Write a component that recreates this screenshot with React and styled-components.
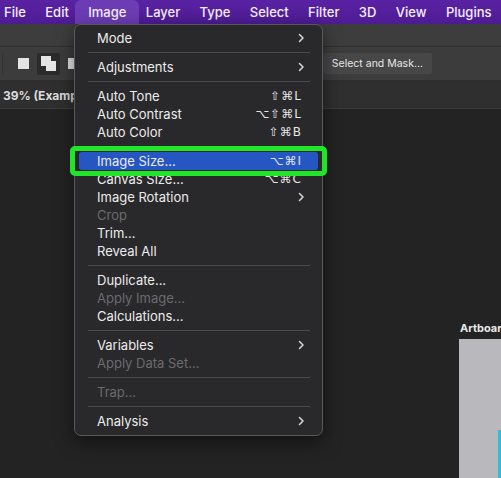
import React from 'react'
import styled, { createGlobalStyle } from 'styled-components'

const GlobalStyle = createGlobalStyle`
  html, body {
    margin: 0;
    padding: 0;
    background: #232323;
  }
  body {
    font-family: Inter, "Noto Sans", "DejaVu Sans", sans-serif;
    -webkit-font-smoothing: antialiased;
  }
`

const Screen = styled.div`
  position: relative;
  width: 501px;
  height: 478px;
  overflow: hidden;
  display: flex;
  flex-direction: column;
  background: #232323;
`

const MenuBar = styled.div`
  height: 24px;
  flex: 0 0 24px;
  display: flex;
  align-items: center;
  gap: 19.4px;
  padding-left: 4px;
  background: linear-gradient(#5a22a3, #4e1b94);
`

const MenuBarItem = styled.div`
  height: 24px;
  display: flex;
  align-items: center;
  padding: 0 ${({ active }) => (active ? 13 : 0)}px;
  margin: 0 ${({ active }) => (active ? -13 : 0)}px;
  font-size: 13px;
  font-weight: 500;
  color: #f4f0fa;
  border-radius: 6px 6px 0 0;
  background: ${({ active }) => (active ? '#6c3cb4' : 'transparent')};
`

const TopStrip = styled.div`
  height: 22px;
  flex: 0 0 22px;
  background: #3d3d3d;
  border-bottom: 1px solid #2f2f2f;
`

const OptionsBar = styled.div`
  height: 33px;
  flex: 0 0 33px;
  display: flex;
  align-items: center;
  background: #3c3c3c;
  border-bottom: 2px solid #2e2e2e;
  padding-left: 2px;
`

const Divider = styled.div`
  width: 1px;
  height: 22px;
  background: #333333;
  margin-right: 9px;
`

const ShapeButton = styled.div`
  width: 23px;
  height: 22px;
  display: flex;
  align-items: center;
  justify-content: center;
  margin-right: 2px;
  border-radius: 2px;
  background: ${({ selected }) => (selected ? '#2b2b2b' : 'transparent')};
`

const MaskButton = styled.div`
  margin-left: auto;
  margin-right: 69px;
  height: 21px;
  padding: 0 9px;
  display: flex;
  align-items: center;
  background: #474747;
  border-radius: 2px;
  font-size: 10.5px;
  color: #e6e6e6;
`

const TabBar = styled.div`
  height: 26px;
  flex: 0 0 26px;
  display: flex;
  align-items: center;
  padding-left: 3px;
  background: #2f2f2f;
  border-bottom: 1px solid #3a3a3a;
`

const TabLabel = styled.span`
  font-size: 12px;
  font-weight: 700;
  color: #dcdcdc;
  white-space: nowrap;
`

const Canvas = styled.div`
  flex: 1;
  display: flex;
  justify-content: flex-end;
  padding-top: 212px;
`

const Artboard = styled.div`
  width: 42px;
  display: flex;
  flex-direction: column;
`

const ArtboardLabel = styled.div`
  font-size: 11px;
  font-weight: 700;
  color: #e8e8e8;
  white-space: nowrap;
  height: 18px;
  margin-left: 1px;
`

const ArtboardSheet = styled.div`
  flex: 1;
  height: 140px;
  background: #b9b8bc;
  display: flex;
  justify-content: flex-end;
  align-items: flex-end;
`

const CyanEdge = styled.div`
  width: 3px;
  height: 48px;
  background: #2bbfd8;
`

const Dropdown = styled.div`
  position: absolute;
  left: 74px;
  top: 24px;
  width: 247px;
  padding: 4px 0 5px;
  background: #29292b;
  border: 1px solid #59585b;
  border-radius: 7px;
  box-shadow: 0 6px 18px rgba(0, 0, 0, 0.5);
  display: flex;
  flex-direction: column;
`

const Row = styled.div`
  height: 18px;
  margin: 0 4px;
  padding: 0 16px 0 18px;
  display: flex;
  align-items: center;
  justify-content: space-between;
  border-radius: 3px;
  font-size: 13px;
  color: ${({ disabled }) => (disabled ? '#6b6a6e' : '#ececec')};
  background: ${({ active }) => (active ? '#2556c2' : 'transparent')};
`

const Shortcut = styled.span`
  font-family: "DejaVu Sans", sans-serif;
  font-size: 12px;
  letter-spacing: 1px;
  color: #e6e6e6;
`

const Separator = styled.div`
  height: 1px;
  margin: 5px 12px 5px 13px;
  background: #4a494c;
`

const Highlight = styled.div`
  position: absolute;
  left: 70px;
  top: 146px;
  width: 247px;
  height: 20px;
  border: 5px solid #1fe628;
  border-radius: 5px;
  pointer-events: none;
`

const Chevron = () => (
  <svg width="7" height="10" viewBox="0 0 7 10" style={{ marginRight: -3 }}>
    <path d="M1.5 1.5 L5 5 L1.5 8.5" fill="none" stroke="#d8d8d8" strokeWidth="1.5" strokeLinecap="round" strokeLinejoin="round" />
  </svg>
)

const menuBar = ['File', 'Edit', 'Image', 'Layer', 'Type', 'Select', 'Filter', '3D', 'View', 'Plugins']

const menu = [
  { label: 'Mode', sub: true },
  '-',
  { label: 'Adjustments', sub: true },
  '-',
  { label: 'Auto Tone', keys: '⇧⌘L' },
  { label: 'Auto Contrast', keys: '⌥⇧⌘L' },
  { label: 'Auto Color', keys: '⇧⌘B' },
  '-',
  { label: 'Image Size...', keys: '⌥⌘I', active: true },
  { label: 'Canvas Size...', keys: '⌥⌘C' },
  { label: 'Image Rotation', sub: true },
  { label: 'Crop', disabled: true },
  { label: 'Trim...' },
  { label: 'Reveal All' },
  '-',
  { label: 'Duplicate...' },
  { label: 'Apply Image...', disabled: true },
  { label: 'Calculations...' },
  '-',
  { label: 'Variables', sub: true },
  { label: 'Apply Data Set...', disabled: true },
  '-',
  { label: 'Trap...', disabled: true },
  '-',
  { label: 'Analysis', sub: true }
]

const App = () => (
  <Screen>
    <GlobalStyle />
    <MenuBar>
      {menuBar.map(label => (
        <MenuBarItem key={label} active={label === 'Image'}>
          {label}
        </MenuBarItem>
      ))}
    </MenuBar>
    <TopStrip />
    <OptionsBar>
      <Divider />
      <ShapeButton>
        <svg width="11" height="11"><rect width="11" height="11" fill="#e4e4e4" /></svg>
      </ShapeButton>
      <ShapeButton selected>
        <svg width="15" height="15">
          <rect x="0" y="0" width="10" height="10" fill="#e4e4e4" />
          <rect x="5" y="5" width="10" height="10" fill="#e4e4e4" />
        </svg>
      </ShapeButton>
      <ShapeButton>
        <svg width="11" height="11"><rect width="11" height="11" fill="#e4e4e4" /></svg>
      </ShapeButton>
      <MaskButton>Select and Mask...</MaskButton>
    </OptionsBar>
    <TabBar>
      <TabLabel>39% (Example</TabLabel>
    </TabBar>
    <Canvas>
      <Artboard>
        <ArtboardLabel>Artboard</ArtboardLabel>
        <ArtboardSheet>
          <CyanEdge />
        </ArtboardSheet>
      </Artboard>
    </Canvas>

    <Dropdown>
      {menu.map((item, i) =>
        item === '-' ? (
          <Separator key={i} />
        ) : (
          <Row key={item.label} active={item.active} disabled={item.disabled}>
            <span>{item.label}</span>
            {item.keys && <Shortcut>{item.keys}</Shortcut>}
            {item.sub && <Chevron />}
          </Row>
        )
      )}
    </Dropdown>
    <Highlight />
  </Screen>
)

export default App
